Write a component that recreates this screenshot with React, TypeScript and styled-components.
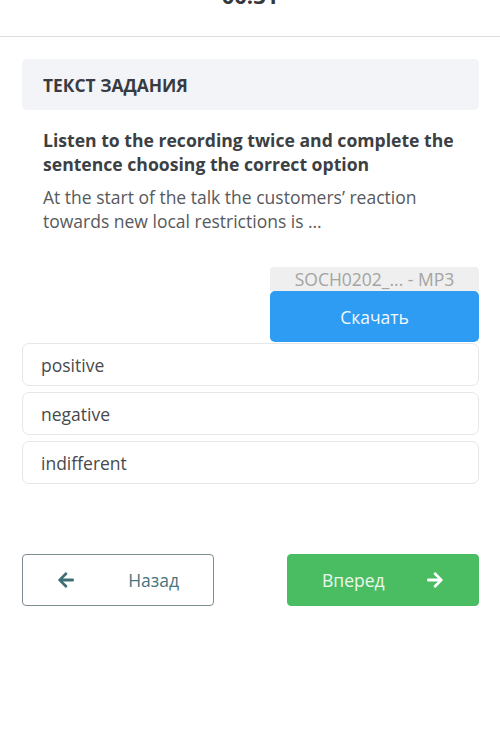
import React from 'react';
import styled, { createGlobalStyle } from 'styled-components';
import { FaArrowLeft, FaArrowRight } from 'react-icons/fa';

const GlobalStyle = createGlobalStyle`
    html, body {
        margin: 0;
        padding: 0;
        background: #fff;
    }
    * {
        box-sizing: border-box;
    }
`

const Page = styled.div`
    width: 500px;
    min-height: 753px;
    font-family: "Open Sans", "Liberation Sans", sans-serif;
    background: #fff;
    overflow: hidden;
`

const TimerBar = styled.div`
    height: 37px;
    border-bottom: 1px solid #dedede;
    display: flex;
    justify-content: center;
    align-items: flex-start;
`

const Timer = styled.div`
    margin-top: -20px;
    font-size: 22px;
    font-weight: 700;
    color: #35383d;
    line-height: 30px;
`

const Content = styled.div`
    padding: 22px 21px 0 22px;
`

const TaskHeader = styled.div`
    height: 51px;
    background: #f3f4f7;
    border-radius: 5px;
    display: flex;
    align-items: center;
    padding: 0 21px;
    font-size: 17.4px;
    font-weight: 700;
    color: #383b41;
    text-transform: uppercase;
`

const TaskBody = styled.div`
    padding: 18px 21px 0 21px;
`

const Question = styled.p`
    margin: 0;
    font-size: 17.6px;
    line-height: 24px;
    font-weight: 700;
    color: #3c3f43;
`

const Statement = styled.p`
    margin: 9px 0 0;
    font-size: 17.5px;
    line-height: 24px;
    color: #57595c;
`

const Attachment = styled.div`
    margin-top: 34px;
    margin-left: auto;
    width: 209px;
    display: flex;
    flex-direction: column;
`

const FileName = styled.div`
    height: 24px;
    background: #efefef;
    border-radius: 4px 4px 0 0;
    text-align: center;
    font-size: 17.5px;
    line-height: 24px;
    color: #a4a4a4;
    white-space: nowrap;
`

const DownloadButton = styled.button`
    height: 51px;
    border: none;
    border-radius: 5px;
    background: #2d9cf2;
    color: #f2f8ff;
    font-family: inherit;
    font-size: 17.5px;
    cursor: pointer;
`

const Options = styled.div`
    margin-top: 1px;
    display: flex;
    flex-direction: column;
    gap: 6px;
`

const Option = styled.div`
    height: 43px;
    border: 1px solid #e6e6e6;
    border-radius: 7px;
    display: flex;
    align-items: center;
    padding: 0 18px;
    font-size: 17.5px;
    color: #474a4d;
    background: #fff;
`

const Nav = styled.div`
    margin-top: 70px;
    display: flex;
    justify-content: space-between;
`

interface INavButton {
    primary?: boolean;
}

const NavButton = styled.button<INavButton>`
    width: 192px;
    height: 52px;
    border-radius: 4px;
    border: 1px solid ${({primary}) => primary ? '#4abd63' : '#7d8d92'};
    background: ${({primary}) => primary ? '#4abd63' : '#fff'};
    color: ${({primary}) => primary ? '#eaf8ec' : '#477580'};
    display: flex;
    align-items: center;
    justify-content: space-between;
    padding: 0 34px;
    font-family: inherit;
    font-size: 17.5px;
    cursor: pointer;

    svg {
        width: 18px;
        height: 18px;
        color: ${({primary}) => primary ? '#fff' : '#3b6e75'};
    }
`

const options = ['positive', 'negative', 'indifferent'];

const App = () => {
    return (
        <Page>
            <GlobalStyle />
            <TimerBar>
                <Timer>00:31</Timer>
            </TimerBar>
            <Content>
                <TaskHeader>Текст задания</TaskHeader>
                <TaskBody>
                    <Question>Listen to the recording twice and complete the sentence choosing the correct option</Question>
                    <Statement>At the start of the talk the customers’ reaction towards new local restrictions is …</Statement>
                </TaskBody>
                <Attachment>
                    <FileName>SOCH0202_... - MP3</FileName>
                    <DownloadButton>Скачать</DownloadButton>
                </Attachment>
                <Options>
                    {options.map((item) => (
                        <Option key={item}>{item}</Option>
                    ))}
                </Options>
                <Nav>
                    <NavButton>
                        <FaArrowLeft />
                        Назад
                    </NavButton>
                    <NavButton primary>
                        Вперед
                        <FaArrowRight />
                    </NavButton>
                </Nav>
            </Content>
        </Page>
    );
};

export default App;
